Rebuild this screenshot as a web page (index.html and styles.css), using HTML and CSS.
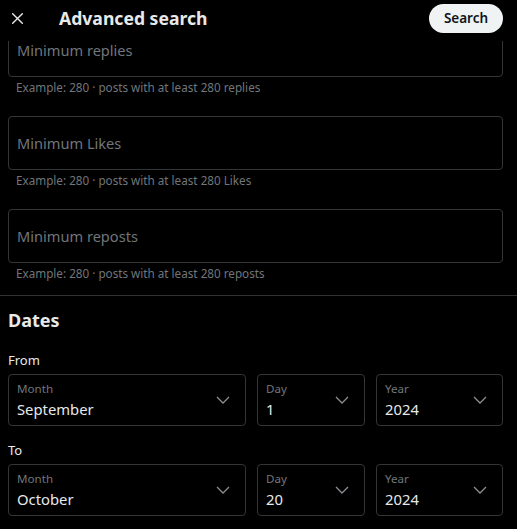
FILE: index.html
```html
<!DOCTYPE html>
<html lang="en">
<head>
<meta charset="utf-8">
<title>Advanced search</title>
<link rel="stylesheet" href="styles.css">
</head>
<body>
<header class="topbar">
  <button class="close-btn" aria-label="Close">
    <svg viewBox="0 0 11 11" width="11" height="11"><path d="M0.7 0.7 L10.3 10.3 M10.3 0.7 L0.7 10.3" stroke="#e7e9ea" stroke-width="1.4" fill="none" stroke-linecap="round"/></svg>
  </button>
  <h1 class="title">Advanced search</h1>
  <button class="search-btn">Search</button>
</header>
<main class="content">
  <section class="engagement">
    <div class="field">
      <div class="input-box"><span class="placeholder">Minimum replies</span></div>
      <p class="hint">Example: 280 · posts with at least 280 replies</p>
    </div>
    <div class="field">
      <div class="input-box"><span class="placeholder">Minimum Likes</span></div>
      <p class="hint">Example: 280 · posts with at least 280 Likes</p>
    </div>
    <div class="field">
      <div class="input-box"><span class="placeholder">Minimum reposts</span></div>
      <p class="hint">Example: 280 · posts with at least 280 reposts</p>
    </div>
  </section>
  <section class="dates">
    <h2 class="section-title">Dates</h2>
    <div class="date-label">From</div>
    <div class="date-row">
      <div class="select"><div class="select-text"><span class="sel-label">Month</span><span class="sel-value">September</span></div><svg class="chev" viewBox="0 0 14 8" width="14" height="8"><path d="M1 1 L7 7 L13 1" stroke="#8b8f94" stroke-width="1.3" fill="none"/></svg></div>
      <div class="select"><div class="select-text"><span class="sel-label">Day</span><span class="sel-value">1</span></div><svg class="chev" viewBox="0 0 14 8" width="14" height="8"><path d="M1 1 L7 7 L13 1" stroke="#8b8f94" stroke-width="1.3" fill="none"/></svg></div>
      <div class="select"><div class="select-text"><span class="sel-label">Year</span><span class="sel-value">2024</span></div><svg class="chev" viewBox="0 0 14 8" width="14" height="8"><path d="M1 1 L7 7 L13 1" stroke="#8b8f94" stroke-width="1.3" fill="none"/></svg></div>
    </div>
    <div class="date-label to">To</div>
    <div class="date-row">
      <div class="select"><div class="select-text"><span class="sel-label">Month</span><span class="sel-value">October</span></div><svg class="chev" viewBox="0 0 14 8" width="14" height="8"><path d="M1 1 L7 7 L13 1" stroke="#8b8f94" stroke-width="1.3" fill="none"/></svg></div>
      <div class="select"><div class="select-text"><span class="sel-label">Day</span><span class="sel-value">20</span></div><svg class="chev" viewBox="0 0 14 8" width="14" height="8"><path d="M1 1 L7 7 L13 1" stroke="#8b8f94" stroke-width="1.3" fill="none"/></svg></div>
      <div class="select"><div class="select-text"><span class="sel-label">Year</span><span class="sel-value">2024</span></div><svg class="chev" viewBox="0 0 14 8" width="14" height="8"><path d="M1 1 L7 7 L13 1" stroke="#8b8f94" stroke-width="1.3" fill="none"/></svg></div>
    </div>
  </section>
</main>
</body>
</html>
```
FILE: styles.css
```css
* { box-sizing: border-box; }
html, body {
  margin: 0;
  padding: 0;
  background: #000;
  color: #e7e9ea;
  font-family: "Noto Sans", "Open Sans", sans-serif;
  overflow: hidden;
}
.topbar {
  position: fixed;
  top: 0;
  left: 0;
  right: 0;
  height: 41px;
  padding: 0 14px 5px 0;
  display: flex;
  align-items: center;
  background: #000;
  z-index: 2;
}
.close-btn {
  width: 34px;
  height: 34px;
  padding: 0;
  border: 0;
  background: transparent;
  display: flex;
  align-items: center;
  justify-content: center;
}
.title {
  margin: 0 0 0 25px;
  font-size: 17.6px;
  font-weight: 700;
  line-height: 24px;
  color: #e7e9ea;
}
.search-btn {
  margin-left: auto;
  width: 74px;
  height: 29px;
  border: 0;
  border-radius: 15px;
  background: #eff3f4;
  color: #0f1419;
  font-family: inherit;
  font-size: 13.5px;
  font-weight: 600;
  padding: 0;
}
.content {
  padding-top: 23px;
}
.engagement {
  padding: 0 14px 14px 8px;
  display: flex;
  flex-direction: column;
  gap: 21px;
}
.field {
  display: flex;
  flex-direction: column;
}
.input-box {
  height: 54px;
  border: 1px solid #333639;
  border-radius: 4px;
  padding: 0 8px;
  display: flex;
  align-items: center;
}
.placeholder {
  font-size: 14.6px;
  color: #71767b;
}
.hint {
  margin: 2px 0 0 8px;
  font-size: 11.7px;
  line-height: 16px;
  color: #71767b;
}
.dates {
  border-top: 1px solid #2f3336;
  padding: 12px 14px 0 8px;
}
.section-title {
  margin: 0;
  font-size: 18px;
  line-height: 24px;
  font-weight: 700;
}
.date-label {
  margin-top: 18px;
  font-size: 13px;
  line-height: 20px;
}
.date-label.to {
  margin-top: 14px;
}
.date-row {
  margin-top: 4px;
  display: grid;
  grid-template-columns: 238px 108px 1fr;
  column-gap: 11px;
}
.select {
  height: 52px;
  border: 1px solid #333639;
  border-radius: 4px;
  padding: 6px 15px 0 8px;
  display: flex;
  align-items: flex-start;
  justify-content: space-between;
}
.select-text {
  display: flex;
  flex-direction: column;
}
.sel-label {
  font-size: 11.6px;
  line-height: 16px;
  color: #71767b;
}
.sel-value {
  margin-top: 2px;
  font-size: 14.8px;
  line-height: 20px;
  color: #e7e9ea;
}
.chev {
  align-self: center;
  margin-top: -6px;
}
```
